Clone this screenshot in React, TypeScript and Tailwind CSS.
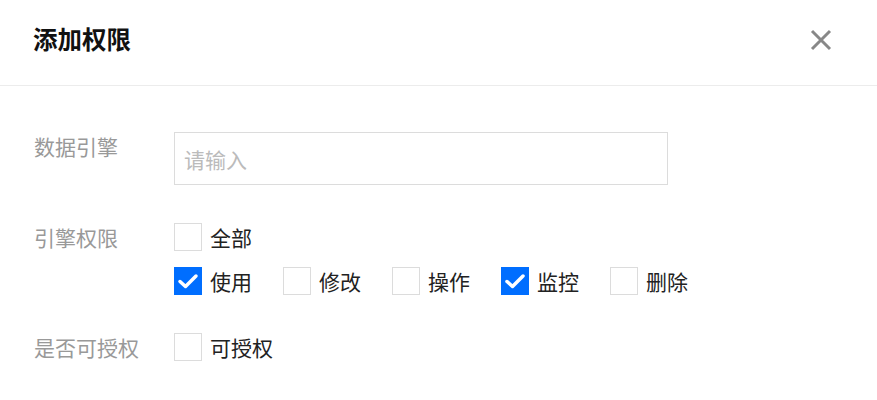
import { useState } from "react";

const FONT = { fontFamily: '"Noto Sans CJK SC", "Noto Sans", sans-serif' };

type Item = { key: string; label: string };

const PERMS: Item[] = [
  { key: "use", label: "使用" },
  { key: "edit", label: "修改" },
  { key: "op", label: "操作" },
  { key: "monitor", label: "监控" },
  { key: "delete", label: "删除" },
];

function Checkbox({
  checked,
  label,
  onChange,
}: {
  checked: boolean;
  label: string;
  onChange: () => void;
}) {
  return (
    <label className="flex cursor-pointer items-center gap-2" onClick={onChange}>
      <span
        className={
          checked
            ? "flex h-[28px] w-[28px] items-center justify-center bg-[#006eff]"
            : "flex h-[28px] w-[28px] items-center justify-center border border-[#dcdcdc] bg-white"
        }
      >
        {checked ? (
          <svg width="28" height="28" viewBox="0 0 28 28" fill="none">
            <path
              d="M6 14.5 L11.5 19.5 L22 9"
              stroke="white"
              strokeWidth="3.5"
              strokeLinecap="round"
              strokeLinejoin="round"
            />
          </svg>
        ) : null}
      </span>
      <span className="text-[21px] leading-[28px] text-[#222]">{label}</span>
    </label>
  );
}

export default function App() {
  const [all, setAll] = useState(false);
  const [perms, setPerms] = useState<Record<string, boolean>>({
    use: true,
    monitor: true,
  });
  const [grant, setGrant] = useState(false);

  function toggle(key: string) {
    setPerms((p) => ({ ...p, [key]: !p[key] }));
  }

  return (
    <div className="h-[400px] w-[877px] bg-white" style={FONT}>
      <div className="flex h-[86px] items-center justify-between border-b border-[#ececec] pb-[6px] pl-[33px] pr-[45px]">
        <h2 className="text-[24.5px] font-bold leading-none text-[#111]">添加权限</h2>
        <svg width="22" height="22" viewBox="0 0 22 22" className="text-[#888]">
          <path d="M2 2 L20 20 M20 2 L2 20" stroke="currentColor" strokeWidth="3" />
        </svg>
      </div>

      <div className="flex flex-col gap-[38px] pl-[34px] pt-[46px]">
        <div className="flex items-start">
          <div className="w-[140px] text-[21px] leading-[28px] text-[#999]">数据引擎</div>
          <input
            placeholder="请输入"
            className="h-[53px] w-[494px] border border-[#dcdcdc] px-[9px] text-[21px] text-[#222] outline-none placeholder:text-[#bbb]"
          />
        </div>

        <div className="flex items-start">
          <div className="w-[140px] text-[21px] leading-[28px] text-[#999]">引擎权限</div>
          <div className="flex flex-col gap-[16px]">
            <Checkbox checked={all} label="全部" onChange={() => setAll(!all)} />
            <div className="flex gap-[31px]">
              {PERMS.map((p) => (
                <Checkbox
                  key={p.key}
                  checked={!!perms[p.key]}
                  label={p.label}
                  onChange={() => toggle(p.key)}
                />
              ))}
            </div>
          </div>
        </div>

        <div className="flex items-start">
          <div className="w-[140px] text-[21px] leading-[28px] text-[#999]">是否可授权</div>
          <Checkbox checked={grant} label="可授权" onChange={() => setGrant(!grant)} />
        </div>
      </div>
    </div>
  );
}
